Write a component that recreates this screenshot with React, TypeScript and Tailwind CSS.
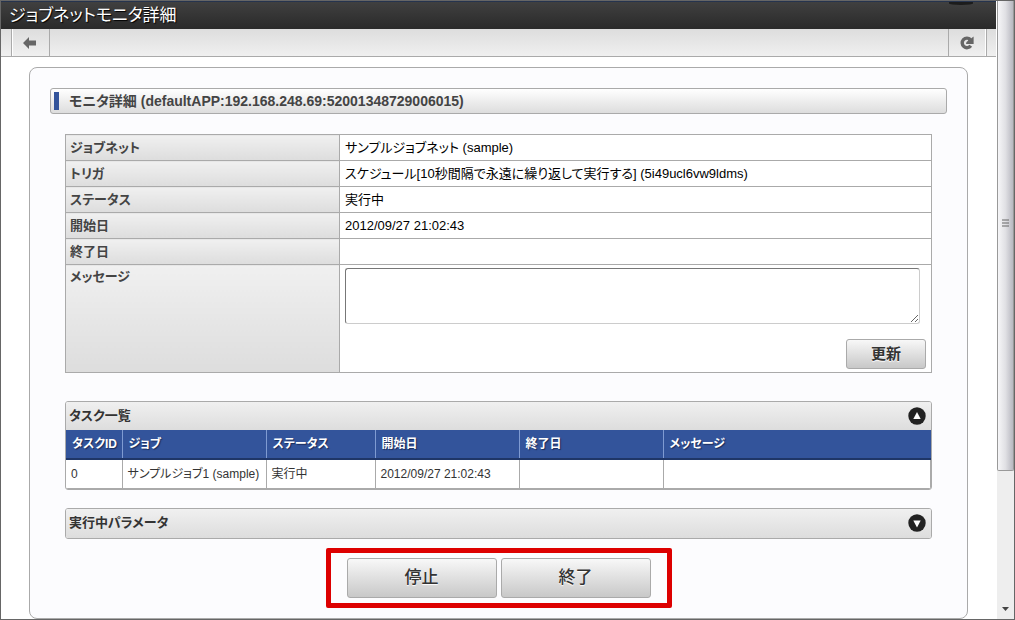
import type { ReactNode } from "react";
import { clsx } from "clsx";

const details = [
  { label: "ジョブネット", value: "サンプルジョブネット (sample)" },
  { label: "トリガ", value: "スケジュール[10秒間隔で永遠に繰り返して実行する] (5i49ucl6vw9ldms)" },
  { label: "ステータス", value: "実行中" },
  { label: "開始日", value: "2012/09/27 21:02:43" },
  { label: "終了日", value: "" },
];

const taskColumns = [
  { label: "タスクID", width: "w-14" },
  { label: "ジョブ", width: "w-36" },
  { label: "ステータス", width: "w-[109px]" },
  { label: "開始日", width: "w-36" },
  { label: "終了日", width: "w-36" },
  { label: "メッセージ", width: "" },
];

const tasks = [["0", "サンプルジョブ1 (sample)", "実行中", "2012/09/27 21:02:43", "", ""]];

function BackIcon() {
  return (
    <svg width="13" height="12" viewBox="0 0 13 12" aria-hidden="true">
      <path d="M0 6 6 0v3.500h7v5H6V12z" fill="#666" />
    </svg>
  );
}

function RefreshIcon() {
  return (
    <svg width="14" height="14" viewBox="0 0 14 14" aria-hidden="true">
      <path d="M10.800 9.800A4.800 4.800 0 1 1 10.400 3.500" fill="none" stroke="#666" strokeWidth="3.400" />
      <path d="M13.600 0.500V8H6L6.500 6z" fill="#666" />
      <path d="M8.500 5.200 11 3.500" stroke="#666" strokeWidth="2" />
    </svg>
  );
}

function ToggleIcon({ open }: { open: boolean }) {
  return (
    <svg width="18" height="18" viewBox="0 0 18 18" aria-hidden="true">
      <circle cx="9" cy="9" r="8.700" fill="#222" />
      <path d={open ? "M9 5 12.700 12H5.300z" : "M9 13.500 5.300 6.500h7.400z"} fill="#fff" />
    </svg>
  );
}

function GrayButton({ className, children }: { className?: string; children: ReactNode }) {
  return (
    <button
      type="button"
      className={clsx(
        "rounded-[3px] border border-[#aaa] bg-linear-to-b from-[#f8f8f8] to-[#c8c8c8] text-[#333] [text-shadow:0_1px_1px_#fff]",
        className
      )}
    >
      {children}
    </button>
  );
}

function Section({ title, open, children }: { title: string; open: boolean; children?: ReactNode }) {
  return (
    <section className="overflow-hidden rounded-[3px] border border-[#aaa] bg-white">
      <div className="flex h-7 items-center justify-between bg-linear-to-b from-[#f0f0f0] to-[#ddd] pr-[5px] pl-[3px] last:h-[29px]">
        <h3 className="text-[13px] font-bold">{title}</h3>
        <button type="button" aria-label={title} aria-expanded={open}>
          <ToggleIcon open={open} />
        </button>
      </div>
      {children}
    </section>
  );
}

function TaskTable() {
  return (
    <table className="w-full table-fixed border-collapse border-b border-[#aaa]">
      <thead>
        <tr className="h-[29px] border-b-2 border-[#1f3667] bg-[#33549b]">
          {taskColumns.map((col) => (
            <th
              key={col.label}
              scope="col"
              className={clsx(
                "border-r border-[#7f9bd2] pl-1.5 text-left text-[12px] leading-4 font-bold whitespace-nowrap text-white [text-shadow:1px_1px_1px_#1a2c59] last:border-r-0",
                col.width
              )}
            >
              {col.label}
            </th>
          ))}
        </tr>
      </thead>
      <tbody>
        {tasks.map((row) => (
          <tr key={row[0]} className="h-[29px]">
            {row.map((cell, i) => (
              <td
                key={i}
                className="border-r border-[#aaa] pl-[5px] text-[12px] leading-4 whitespace-nowrap"
              >
                {cell}
              </td>
            ))}
          </tr>
        ))}
      </tbody>
    </table>
  );
}

function Scrollbar() {
  return (
    <div
      className="flex w-[18px] shrink-0 flex-col justify-between border-l border-white bg-[#eee]"
      aria-hidden="true"
    >
      <div className="flex h-[76%] items-center justify-center rounded-b-xs border border-t-0 border-[#999] bg-linear-to-r from-[#f6f6f8] via-[#e0e0e4] to-[#b8b8c0] pb-6">
        <svg width="7" height="8" viewBox="0 0 7 8">
          <path d="M0 1h7M0 4h7M0 7h7" stroke="#666" />
        </svg>
      </div>
      <svg className="mb-2 self-center" width="7" height="4" viewBox="0 0 7 4">
        <path d="M0 0h7L3.500 4z" fill="#444" />
      </svg>
    </div>
  );
}

export default function App() {
  return (
    <div className="flex min-h-screen border border-[#666] bg-white font-['Liberation_Sans','Noto_Sans_CJK_JP',sans-serif] text-[13px] text-[#333] [font-feature-settings:'palt']">
      <div className="flex min-w-0 flex-1 flex-col">
        <header className="flex h-7 items-center overflow-hidden border-t border-[#26344e] bg-linear-to-b from-[#404040] to-[#2a2a2a] pl-2">
          <h1 className="text-[17px] leading-5 text-white [text-shadow:1px_1px_1px_#000]">
            ジョブネットモニタ詳細
          </h1>
          <div className="mr-[23px] ml-auto h-[3px] w-6 self-start rounded-b-[50%] bg-[#1c1c1c]" />
        </header>

        <nav className="flex h-7 justify-between border-b border-[#aaa] bg-linear-to-b from-[#ddd] to-[#f0f0f0] pr-[9px] pl-2.5">
          <button
            type="button"
            aria-label="戻る"
            className="flex w-[39px] items-center justify-center border-x border-[#aaa] pr-0.5 shadow-[inset_1px_0_#fff]"
          >
            <BackIcon />
          </button>
          <button
            type="button"
            aria-label="最新の情報に更新"
            className="flex w-[39px] items-center justify-center border-x border-[#aaa] pr-0.5 shadow-[inset_-1px_0_#fff]"
          >
            <RefreshIcon />
          </button>
        </nav>

        <main className="mx-7 mt-2.5 flex-1 rounded-lg border border-[#aaa] bg-[#fcfcfe] px-5 pt-5 pb-2">
          <div className="flex h-[26px] items-center gap-2.5 rounded-[3px] border border-[#aaa] bg-linear-to-b from-white to-[#ddd] pl-[3px]">
            <span className="h-[18px] w-[5px] bg-[#33549b]" />
            <h2 className="text-[14px] leading-5 font-bold text-[#444]">
              モニタ詳細 (defaultAPP:192.168.248.69:52001348729006015)
            </h2>
          </div>

          <div className="mx-[15px] mt-5">
            <table className="w-full table-fixed border-collapse text-[13px] leading-4">
              <tbody>
                {details.map((row) => (
                  <tr key={row.label} className="h-[26px]">
                    <th
                      scope="row"
                      className="w-[274px] border border-[#aaa] bg-linear-to-b from-[#f0f0f0] to-[#ddd] px-1 text-left font-bold text-[#444]"
                    >
                      {row.label}
                    </th>
                    <td className="border border-[#aaa] bg-white px-[5px] text-black">{row.value}</td>
                  </tr>
                ))}
                <tr>
                  <th
                    scope="row"
                    className="border border-[#aaa] bg-linear-to-b from-[#f0f0f0] to-[#ddd] px-1 py-1 text-left align-top font-bold text-[#444]"
                  >
                    <label htmlFor="message">メッセージ</label>
                  </th>
                  <td className="border border-[#aaa] bg-white px-[5px] py-[3px]">
                    <textarea
                      id="message"
                      className="block h-14 w-[calc(100%-6px)] rounded-[3px] border border-[#ccc] border-t-[#777] border-l-[#777] bg-white p-1"
                    />
                    <div className="mt-[15px] flex justify-end">
                      <GrayButton className="h-[30px] w-20 text-[15px] font-bold">更新</GrayButton>
                    </div>
                  </td>
                </tr>
              </tbody>
            </table>

            <div className="mt-7 flex flex-col gap-[18px]">
              <Section title="タスク一覧" open>
                <TaskTable />
              </Section>
              <Section title="実行中パラメータ" open={false} />
            </div>
          </div>

          <div className="mx-auto mt-[9px] flex w-fit gap-1 rounded-xs border-[5px] border-[#d00] px-4 py-[5px]">
            <GrayButton className="h-10 w-[150px] text-[17px] font-medium">停止</GrayButton>
            <GrayButton className="h-10 w-[150px] text-[17px] font-medium">終了</GrayButton>
          </div>
        </main>
      </div>
      <Scrollbar />
    </div>
  );
}
